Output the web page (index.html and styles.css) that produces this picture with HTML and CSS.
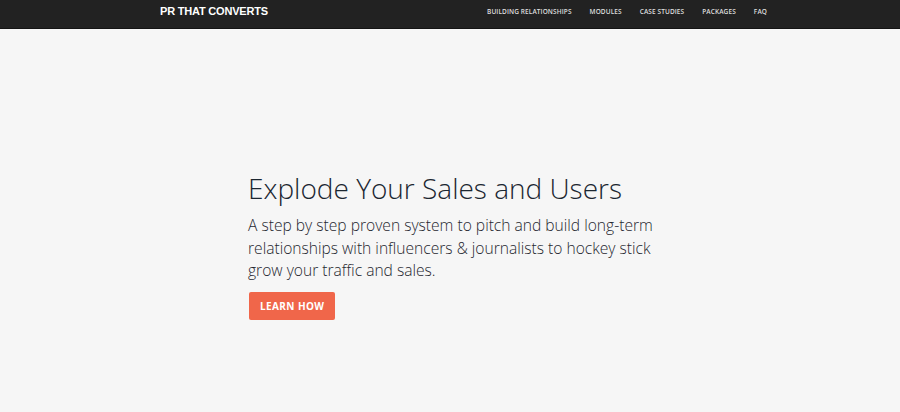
FILE: index.html
```html
<!DOCTYPE html>
<html lang="en">
<head>
<meta charset="utf-8">
<title>PR That Converts</title>
<link rel="stylesheet" href="styles.css">
</head>
<body>
<header class="topbar">
  <div class="topbar-inner">
    <a class="logo" href="#">PR THAT CONVERTS</a>
    <nav class="nav">
      <a href="#">Building Relationships</a>
      <a href="#">Modules</a>
      <a href="#">Case Studies</a>
      <a href="#">Packages</a>
      <a href="#">FAQ</a>
    </nav>
  </div>
</header>
<main class="hero">
  <div class="hero-inner">
    <h1 class="hero-title">Explode Your Sales and Users</h1>
    <p class="hero-text">A step by step proven system to pitch and build long-term relationships with influencers &amp; journalists to hockey stick grow your traffic and sales.</p>
    <a class="btn" href="#">Learn How</a>
  </div>
</main>
</body>
</html>
```
FILE: styles.css
```css
html, body {
  margin: 0;
  padding: 0;
}
body {
  background: #f6f6f6;
  font-family: "Open Sans", "Liberation Sans", sans-serif;
  color: #1c2731;
}
a { text-decoration: none; }

.topbar {
  background: #222222;
  border-bottom: 1px solid #141414;
  height: 28px;
}
.topbar-inner {
  height: 100%;
  display: flex;
  align-items: flex-start;
  justify-content: space-between;
  padding: 0 133px 0 160px;
}
.logo {
  font-family: "Liberation Sans", Arial, sans-serif;
  font-weight: 700;
  font-size: 11px;
  letter-spacing: -0.2px;
  color: #ffffff;
  line-height: 1;
  padding-top: 6px;
}
.nav {
  display: flex;
  gap: 18px;
  padding-top: 7px;
}
.nav a {
  font-family: "Open Sans", sans-serif;
  font-weight: 600;
  font-size: 6.5px;
  letter-spacing: 0.1px;
  text-transform: uppercase;
  color: #dedede;
  line-height: 9px;
}

.hero-inner {
  padding: 140px 0 0 248px;
  width: 420px;
}
.hero-title {
  margin: 0;
  font-weight: 300;
  font-size: 28px;
  line-height: 38px;
  color: #1b2631;
}
.hero-text {
  margin: 7px 0 0;
  font-weight: 300;
  font-size: 15.6px;
  line-height: 22.5px;
  color: #1f272f;
}
.btn {
  display: inline-block;
  margin: 10px 0 0 1px;
  background: #f0664a;
  color: #fff;
  font-weight: 700;
  font-size: 10px;
  letter-spacing: 0.4px;
  text-transform: uppercase;
  line-height: 28px;
  padding: 0 11px;
  border-radius: 2px;
}
```
